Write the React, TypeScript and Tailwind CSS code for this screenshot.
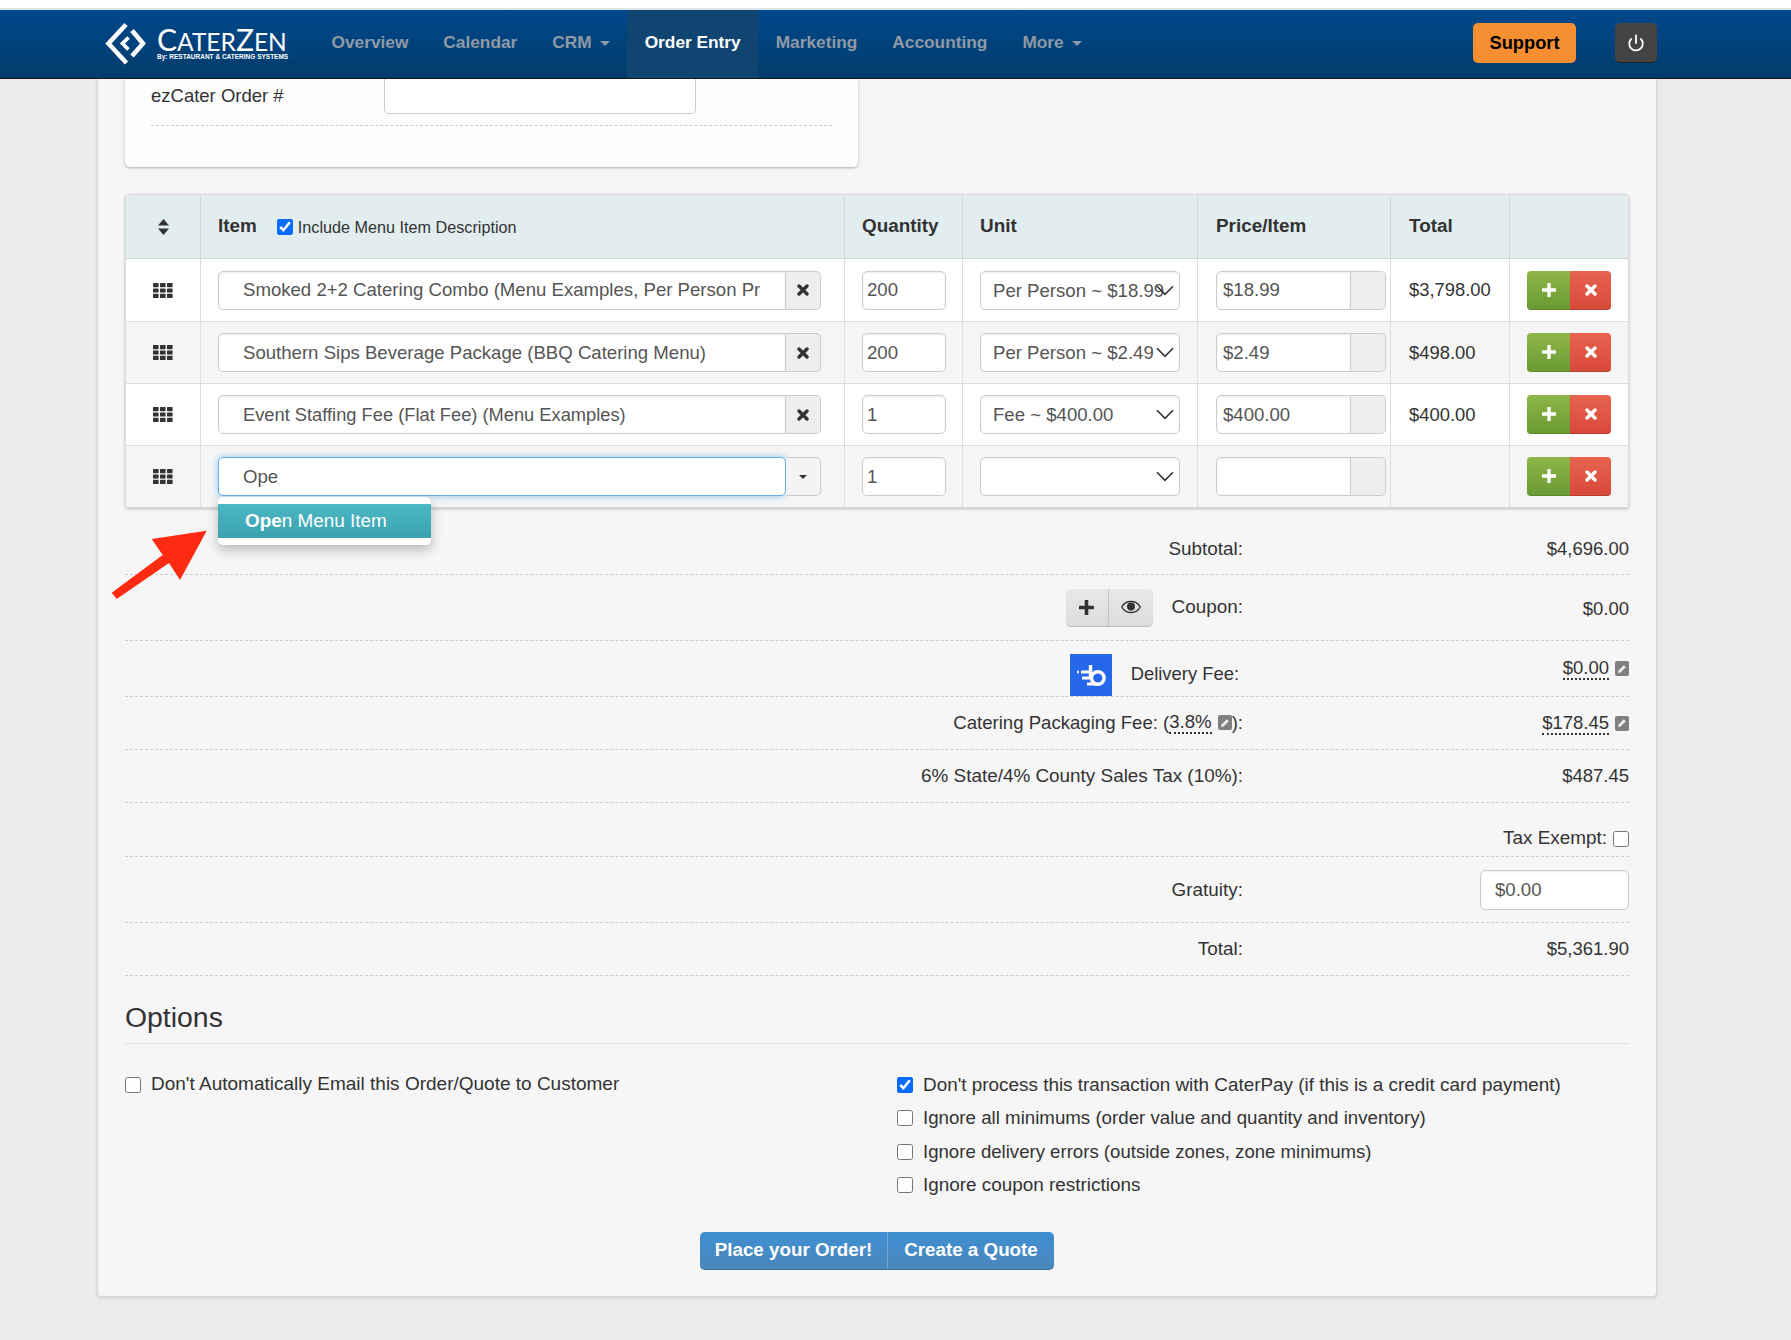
import React from 'react';
import { Power } from 'lucide-react';

const navItems = [
  { label: 'Overview' },
  { label: 'Calendar' },
  { label: 'CRM', caret: true },
  { label: 'Order Entry', active: true },
  { label: 'Marketing' },
  { label: 'Accounting' },
  { label: 'More', caret: true },
];

const rows = [
  { item: 'Smoked 2+2 Catering Combo (Menu Examples, Per Person Pricing)', qty: '200', unit: 'Per Person ~ $18.99', price: '$18.99', total: '$3,798.00', h: 'h-[63px]', size: 'text-[18.6px]' },
  { item: 'Southern Sips Beverage Package (BBQ Catering Menu)', qty: '200', unit: 'Per Person ~ $2.49', price: '$2.49', total: '$498.00', h: 'h-[62px]', size: 'text-[18.6px]' },
  { item: 'Event Staffing Fee (Flat Fee) (Menu Examples)', qty: '1', unit: 'Fee ~ $400.00', price: '$400.00', total: '$400.00', h: 'h-[62px]', size: 'text-[18.3px]' },
  { item: 'Ope', qty: '1', unit: '', price: '', total: '', h: 'h-[61px]', size: 'text-[18.6px]', focused: true },
];

const gridCols = 'grid grid-cols-[75px_644px_118px_235px_193px_119px_1fr]';
const inputBase = 'h-[39px] rounded-[5px] border bg-white text-[#555] outline-none';
const inputCls = `${inputBase} border-[#ccc] text-[18.6px] shadow-[inset_0_1px_2px_rgba(0,0,0,0.08)]`;
const dashedRow = 'border-b border-dashed border-[#ccc]';

function Grid() {
  return (
    <svg width="20" height="15" viewBox="0 0 20 15" fill="#333">
      {[0, 5.4, 10.8].map((y) =>
        [0, 7, 14].map((x) => <rect key={`${x}-${y}`} x={x} y={y} width="5.6" height="4.2" rx="0.6" />)
      )}
    </svg>
  );
}

function Cross({ size = 12, color = '#333' }: { size?: number; color?: string }) {
  return (
    <svg width={size} height={size} viewBox="0 0 12 12">
      <path d="M2 2 10 10M10 2 2 10" stroke={color} strokeWidth="3.4" strokeLinecap="round" />
    </svg>
  );
}

function Plus({ size = 14, color = '#fff' }: { size?: number; color?: string }) {
  return (
    <svg width={size} height={size} viewBox="0 0 14 14">
      <path d="M7 1v12M1 7h12" stroke={color} strokeWidth="3.4" strokeLinecap="round" />
    </svg>
  );
}

function Chevron() {
  return (
    <svg className="pointer-events-none absolute right-[6px] top-[14px]" width="18" height="11" viewBox="0 0 18 11" fill="none">
      <path d="M1 1.2 9 9.4 17 1.2" stroke="#333" strokeWidth="1.6" />
    </svg>
  );
}

function Pencil() {
  return (
    <span className="inline-flex h-[15px] w-[14px] items-center justify-center rounded-[2px] bg-[#808080]">
      <svg width="10" height="10" viewBox="0 0 10 10">
        <path d="M1 9 1.6 6.6 6.8 1.2 8.8 3.2 3.5 8.4Z" fill="#eee" />
      </svg>
    </span>
  );
}

function Logo() {
  return (
    <div className="flex items-center">
      <svg width="41" height="44" viewBox="0 0 41 44" fill="none" stroke="#fff" strokeWidth="4.6">
        <path d="M21 2.5 3.5 21.5 21.5 41" />
        <path d="M27 8.5 38 21.5 27 34" />
        <path d="M23.5 15.5 17.5 21.5 23.5 27.5" strokeWidth="3.8" />
      </svg>
      <div className="ml-[11px] flex flex-col text-white">
        <div className="flex h-[24px] items-baseline whitespace-nowrap font-['Lato',sans-serif] font-normal leading-[24px]">
          <span className="text-[30px]">C</span>
          <span className="text-[24.5px]">ATER</span>
          <span className="text-[30px]">Z</span>
          <span className="text-[24.5px]">EN</span>
        </div>
        <div className="mt-[2px] whitespace-nowrap text-[6.5px] font-bold leading-[8px]">By: RESTAURANT &amp; CATERING SYSTEMS</div>
      </div>
    </div>
  );
}

function Nav() {
  return (
    <>
      <div className="h-[8px] bg-white" />
      <div className="h-[2px] bg-[#dde6ea]" />
      <nav className="flex h-[69px] items-stretch border-b border-[#1a1a1a] bg-linear-to-b from-[#00488c] to-[#023c6b] pl-[105px] pr-[134px]">
        <div className="flex w-[209px] items-center">
          <Logo />
        </div>
        <div className="flex flex-1 items-stretch">
          {navItems.map((n) => (
            <div
              key={n.label}
              className={`flex items-center px-[17.5px] pb-[2px] text-[17.3px] font-bold ${n.active ? 'bg-[#0f4570] text-white' : 'text-[#8f9aa6]'}`}
            >
              {n.label}
              {n.caret && <span className="ml-[8px] mt-[1px] h-0 w-0 border-x-[5px] border-t-[5px] border-x-transparent border-t-current" />}
            </div>
          ))}
        </div>
        <div className="flex items-center gap-[39px] pb-[2px]">
          <button className="h-[40px] w-[103px] rounded-[5px] bg-[#f68f32] text-[18.3px] font-bold text-black">Support</button>
          <button className="flex h-[40px] w-[42px] items-center justify-center rounded-[5px] border-b border-[#222] bg-[#444] text-white">
            <Power size={18} strokeWidth={2.4} />
          </button>
        </div>
      </nav>
    </>
  );
}

function TopCard() {
  return (
    <div className="h-[88px] w-[733px] rounded-b-[5px] bg-[#fdfdfd] px-[26px] shadow-[0_1px_3px_rgba(0,0,0,0.3)]">
      <div className="flex h-[47px] border-b border-dashed border-[#ccc]">
        <span className="mt-[3px] w-[233px] text-[18.5px] text-[#333]">ezCater Order #</span>
        <div className="h-[35px] w-[312px] rounded-b-[5px] border border-t-0 border-[#ccc] bg-white" />
      </div>
    </div>
  );
}

function OrderTable() {
  const headCell = 'flex items-center border-r border-[#cfdadd] pl-[17px] text-[18.9px] font-bold text-[#333]';
  const cell = 'flex items-center border-r border-[#ddd]';
  return (
    <div className="mt-[27px] w-[1504px] rounded-[4px] border border-[#ddd] bg-white shadow-[0_1px_3px_rgba(0,0,0,0.25)]">
      <div className={`${gridCols} h-[64px] border-b border-[#cfdadd] bg-[#e2edf0]`}>
        <div className="flex items-center justify-center border-r border-[#cfdadd]">
          <svg width="11" height="16" viewBox="0 0 11 16" fill="#333">
            <path d="M5.5 0 11 6.6H0ZM0 9.4H11L5.5 16Z" />
          </svg>
        </div>
        <div className={headCell}>
          Item
          <label className="ml-[20px] mt-[2px] flex items-center text-[16.2px] font-normal text-[#333]">
            <input type="checkbox" defaultChecked className="mr-[5px] h-[16px] w-[16px] accent-[#0a6cff]" />
            Include Menu Item Description
          </label>
        </div>
        <div className={headCell}>Quantity</div>
        <div className={headCell}>Unit</div>
        <div className={`${headCell} pl-[18px]`}>Price/Item</div>
        <div className={`${headCell} pl-[18px]`}>Total</div>
        <div />
      </div>
      {rows.map((r, i) => (
        <div
          key={i}
          className={`${gridCols} ${r.h} ${i < 3 ? 'border-b border-[#ddd]' : ''} ${i % 2 ? 'bg-[#f5f5f5]' : 'bg-white'}`}
        >
          <div className={`${cell} justify-center`}>
            <Grid />
          </div>
          <div className={`${cell} pl-[17px]`}>
            <div className="relative flex w-[603px]">
              <input
                readOnly
                value={r.item}
                className={
                  r.focused
                    ? `${inputBase} ${r.size} w-[568px] border-[#66afe9] pl-[24px] pr-[24px] shadow-[0_0_7px_rgba(102,175,233,0.7)]`
                    : `h-[39px] w-[568px] rounded-l-[5px] border border-[#ccc] bg-white pl-[24px] pr-[24px] ${r.size} text-[#555] shadow-[inset_0_1px_2px_rgba(0,0,0,0.08)] outline-none`
                }
              />
              <div
                className={`flex h-[39px] w-[35px] items-center justify-center rounded-r-[5px] border border-l-0 border-[#ccc] ${r.focused ? 'bg-[#f4f4f4]' : 'bg-[#eee]'}`}
              >
                {r.focused ? (
                  <span className="h-0 w-0 border-x-[4.5px] border-t-[4.5px] border-x-transparent border-t-[#333]" />
                ) : (
                  <Cross />
                )}
              </div>
              {r.focused && (
                <div className="absolute left-0 top-[40px] z-10 w-[213px] rounded-[5px] bg-white py-[7px] shadow-[0_5px_12px_rgba(0,0,0,0.25)]">
                  <div className="h-[34px] bg-linear-to-b from-[#4cb8c4] to-[#3aa2b0] pl-[27px] text-[18.9px] leading-[34px] text-white">
                    <b>Ope</b>n Menu Item
                  </div>
                </div>
              )}
            </div>
          </div>
          <div className={`${cell} pl-[17px]`}>
            <input readOnly value={r.qty} className={`${inputCls} w-[84px] pl-[4px]`} />
          </div>
          <div className={`${cell} pl-[17px]`}>
            <div className="relative w-[200px]">
              <div className={`${inputCls} overflow-hidden whitespace-nowrap pl-[12px] leading-[38px]`}>{r.unit}</div>
              <Chevron />
            </div>
          </div>
          <div className={`${cell} pl-[18px]`}>
            <input readOnly value={r.price} className={`${inputCls} w-[135px] rounded-r-none pl-[6px]`} />
            <div className="h-[39px] w-[35px] rounded-r-[5px] border border-l-0 border-[#ccc] bg-[#eee]" />
          </div>
          <div className={`${cell} pl-[18px] text-[18.4px] text-[#333]`}>{r.total}</div>
          <div className="flex items-center pl-[17px]">
            <button className="flex h-[39px] w-[43px] items-center justify-center rounded-l-[4px] border-b border-[#5d8a2c] bg-linear-to-b from-[#8fb647] to-[#6a9a34]">
              <Plus />
            </button>
            <button className="flex h-[39px] w-[41px] items-center justify-center rounded-r-[4px] border-b border-[#b93c30] bg-linear-to-b from-[#e8644f] to-[#d9483a]">
              <Cross size={12} color="#fff" />
            </button>
          </div>
        </div>
      ))}
    </div>
  );
}

function Totals() {
  const row = `${dashedRow} grid grid-cols-[1118px_1fr] items-center text-[18.9px] text-[#333]`;
  const value = 'text-right text-[18.5px]';
  const dotted = 'border-b-2 border-dotted border-[#333] leading-[21px]';
  return (
    <div className="w-[1504px]">
      <div className={`${row} h-[67px] pt-[16px]`}>
        <div className="text-right">Subtotal:</div>
        <div className={value}>$4,696.00</div>
      </div>
      <div className={`${row} h-[66px]`}>
        <div className="flex items-center justify-end">
          <div className="mr-[19px] flex h-[38px] rounded-[5px] border-b border-[#bbb] bg-linear-to-b from-[#e8e8e8] to-[#dcdcdc]">
            <div className="flex w-[43px] items-center justify-center border-r border-[#c4c4c4]">
              <Plus size={15} color="#333" />
            </div>
            <div className="flex w-[44px] items-center justify-center">
              <svg width="20" height="14" viewBox="0 0 20 14">
                <path d="M10 1.5C5.5 1.5 2.2 4.2.8 7 2.2 9.8 5.5 12.5 10 12.5S17.8 9.800 19.200 7C17.800 4.200 14.500 1.500 10 1.500Z" fill="none" stroke="#333" strokeWidth="1.3" />
                <circle cx="10" cy="6.5" r="4" fill="#333" />
              </svg>
            </div>
          </div>
          <span>Coupon:</span>
        </div>
        <div className={`${value} pt-[3px]`}>$0.00</div>
      </div>
      <div className={`${row} h-[56px]`}>
        <div className="flex h-[55px] items-end justify-end pr-[4px]">
          <div className="mr-[19px] flex h-[42px] w-[42px] items-center justify-center bg-[#2767ea]">
            <svg width="42" height="42" viewBox="0 0 42 42" fill="none" stroke="#fff">
              <circle cx="27.8" cy="24" r="6.3" strokeWidth="3.4" />
              <path d="M20.5 11V24" strokeWidth="3.4" />
              <path d="M11 18H19M12 24H21M17 30H27" strokeWidth="2.8" />
              <path d="M7 18H9" strokeWidth="2.4" />
            </svg>
          </div>
          <span className="mb-[8px] text-[18.4px]">Delivery Fee:</span>
        </div>
        <div className="flex items-center justify-end gap-[6px] text-[18.5px]">
          <span className={dotted}>$0.00</span>
          <Pencil />
        </div>
      </div>
      <div className={`${row} h-[53px]`}>
        <div className="flex items-center justify-end text-[18.6px]">
          Catering Packaging Fee: (<span className={dotted}>3.8%</span>
          <span className="ml-[6px] flex"><Pencil /></span>):
        </div>
        <div className="flex items-center justify-end gap-[6px] text-[18.5px]">
          <span className={dotted}>$178.45</span>
          <Pencil />
        </div>
      </div>
      <div className={`${row} h-[53px]`}>
        <div className="text-right">6% State/4% County Sales Tax (10%):</div>
        <div className={value}>$487.45</div>
      </div>
      <div className={`${dashedRow} flex h-[54px] items-center justify-end pt-[18px] text-[18.9px] text-[#333]`}>
        Tax Exempt:
        <input type="checkbox" className="ml-[6px] h-[16px] w-[16px]" />
      </div>
      <div className={`${row} h-[66px]`}>
        <div className="pt-[2px] text-right">Gratuity:</div>
        <div className="flex justify-end">
          <input readOnly value="$0.00" className={`${inputCls} h-[40px] w-[149px] pl-[14px]`} />
        </div>
      </div>
      <div className={`${row} h-[53px]`}>
        <div className="text-right">Total:</div>
        <div className={value}>$5,361.90</div>
      </div>
    </div>
  );
}

function Options() {
  const right = [
    { text: "Don't process this transaction with CaterPay (if this is a credit card payment)", size: 'text-[18.9px]' },
    { text: 'Ignore all minimums (order value and quantity and inventory)', size: 'text-[18.7px]' },
    { text: 'Ignore delivery errors (outside zones, zone minimums)', size: 'text-[18.6px]' },
    { text: 'Ignore coupon restrictions', size: 'text-[18.9px]' },
  ];
  return (
    <div className="w-[1504px] text-[#333]">
      <h2 className="flex h-[68px] items-end border-b border-[#e3e3e3] pb-[10px] text-[28.4px] leading-[32px] text-[#333]">Options</h2>
      <div className="mt-[24px] flex">
        <label className="flex h-[33px] w-[772px] items-center text-[19px]">
          <input type="checkbox" className="mr-[10px] h-[16px] w-[16px]" />
          Don't Automatically Email this Order/Quote to Customer
        </label>
        <div className="flex flex-col">
          {right.map((t, i) => (
            <label key={t.text} className={`flex h-[33.5px] items-center ${t.size}`}>
              <input type="checkbox" defaultChecked={i === 0} className="mr-[10px] h-[16px] w-[16px] accent-[#0a6cff]" />
              {t.text}
            </label>
          ))}
        </div>
      </div>
      <div className="mt-[30px] flex justify-center">
        <div className="flex h-[38px] rounded-[5px] border-b border-[#3a6f9f] bg-linear-to-b from-[#3f8fd2] to-[#4a87bb] text-[18.8px] font-bold text-white">
          <button className="w-[188px] border-r border-[#78a8d0]">Place your Order!</button>
          <button className="w-[166px]">Create a Quote</button>
        </div>
      </div>
    </div>
  );
}

export default function App() {
  return (
    <div className="relative h-[1340px] overflow-hidden bg-[#ececec] font-['Liberation_Sans',Arial,sans-serif]">
      <Nav />
      <div className="ml-[97px] h-[1218px] w-[1560px] rounded-b-[4px] border-x border-b border-[#d8d8d8] bg-[#f6f6f6] pl-[27px] shadow-[0_1px_3px_rgba(0,0,0,0.15)]">
        <TopCard />
        <OrderTable />
        <Totals />
        <Options />
      </div>
      {/* red annotation arrow */}
      <svg className="absolute left-[105px] top-[525px]" width="110" height="80" viewBox="105 525 110 80">
        <path d="M206.7 530.7 151.7 539 162.7 555 111.7 592.7 116.7 599 169 563 180 580Z" fill="#ff2a12" />
      </svg>
    </div>
  );
}
